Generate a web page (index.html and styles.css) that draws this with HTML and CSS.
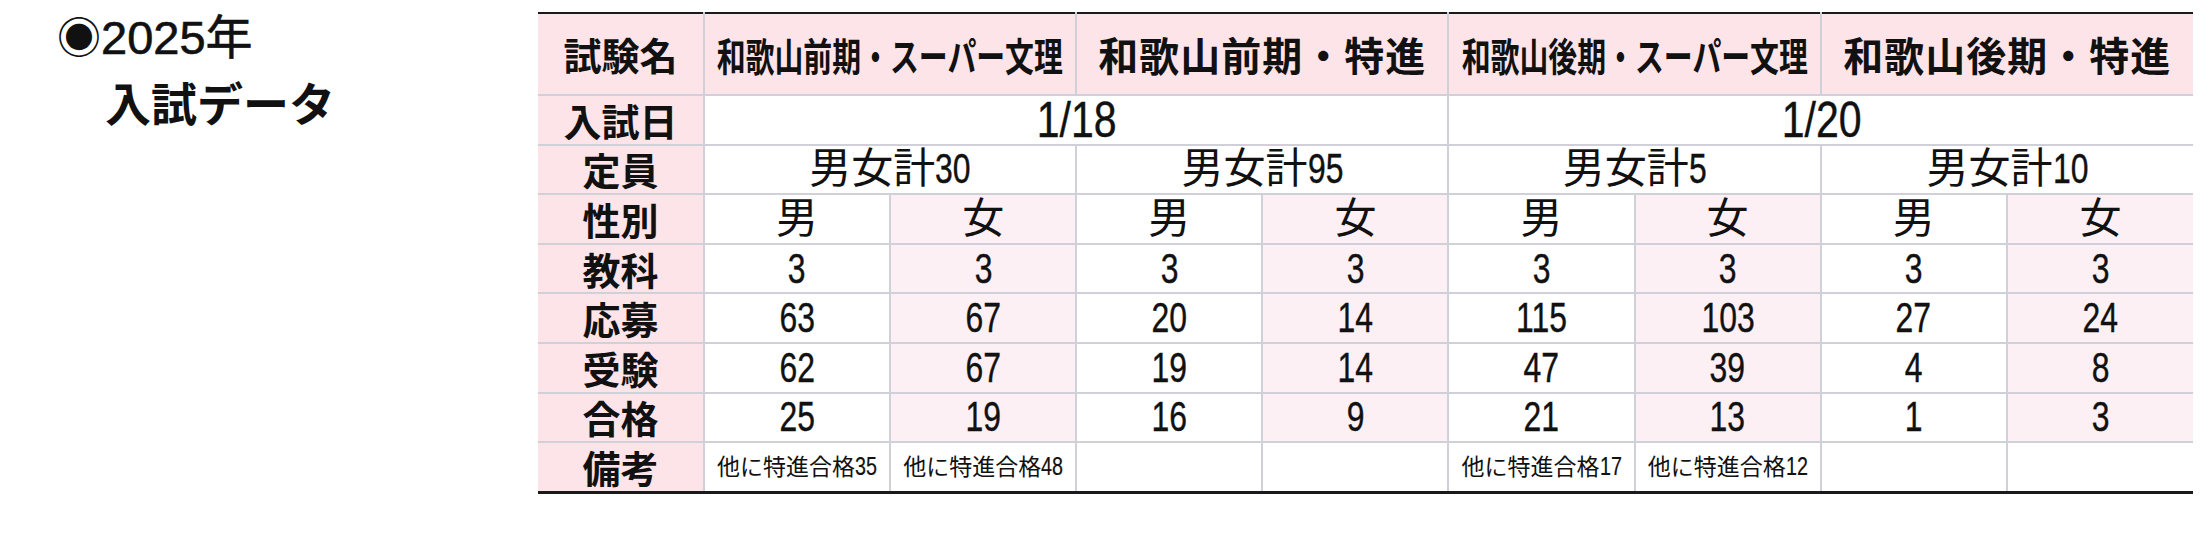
FILE: index.html
```html
<!DOCTYPE html>
<html lang="ja">
<head>
<meta charset="utf-8">
<title>2025年 入試データ</title>
<link rel="stylesheet" href="styles.css">
</head>
<body>
<div class="page">
  <div class="title">
    <div class="title-line1"><span class="mark">◉</span>2025年</div>
    <div class="title-line2">入試データ</div>
  </div>
  <table class="data">
    <colgroup>
      <col class="c-label">
      <col class="c-val"><col class="c-val"><col class="c-val"><col class="c-val">
      <col class="c-val"><col class="c-val"><col class="c-val"><col class="c-val">
    </colgroup>
    <tr class="r-head">
      <th class="lab">試験名</th>
      <th colspan="2" class="head"><div class="squeeze"><span>和歌山前期・スーパー文理</span></div></th>
      <th colspan="2" class="head wide">和歌山前期・特進</th>
      <th colspan="2" class="head"><div class="squeeze"><span>和歌山後期・スーパー文理</span></div></th>
      <th colspan="2" class="head wide">和歌山後期・特進</th>
    </tr>
    <tr>
      <th class="lab">入試日</th>
      <td colspan="4" class="date"><span class="sq">1/18</span></td>
      <td colspan="4" class="date"><span class="sq">1/20</span></td>
    </tr>
    <tr>
      <th class="lab">定員</th>
      <td colspan="2">男女計<span class="num num-2">30</span></td>
      <td colspan="2">男女計<span class="num num-2">95</span></td>
      <td colspan="2">男女計<span class="num num-1">5</span></td>
      <td colspan="2">男女計<span class="num num-2">10</span></td>
    </tr>
    <tr>
      <th class="lab">性別</th>
      <td>男</td><td class="f">女</td><td>男</td><td class="f">女</td>
      <td>男</td><td class="f">女</td><td>男</td><td class="f">女</td>
    </tr>
    <tr>
      <th class="lab">教科</th>
      <td><span class="sq">3</span></td><td class="f"><span class="sq">3</span></td><td><span class="sq">3</span></td><td class="f"><span class="sq">3</span></td>
      <td><span class="sq">3</span></td><td class="f"><span class="sq">3</span></td><td><span class="sq">3</span></td><td class="f"><span class="sq">3</span></td>
    </tr>
    <tr>
      <th class="lab">応募</th>
      <td><span class="sq">63</span></td><td class="f"><span class="sq">67</span></td><td><span class="sq">20</span></td><td class="f"><span class="sq">14</span></td>
      <td><span class="sq">115</span></td><td class="f"><span class="sq">103</span></td><td><span class="sq">27</span></td><td class="f"><span class="sq">24</span></td>
    </tr>
    <tr>
      <th class="lab">受験</th>
      <td><span class="sq">62</span></td><td class="f"><span class="sq">67</span></td><td><span class="sq">19</span></td><td class="f"><span class="sq">14</span></td>
      <td><span class="sq">47</span></td><td class="f"><span class="sq">39</span></td><td><span class="sq">4</span></td><td class="f"><span class="sq">8</span></td>
    </tr>
    <tr>
      <th class="lab">合格</th>
      <td><span class="sq">25</span></td><td class="f"><span class="sq">19</span></td><td><span class="sq">16</span></td><td class="f"><span class="sq">9</span></td>
      <td><span class="sq">21</span></td><td class="f"><span class="sq">13</span></td><td><span class="sq">1</span></td><td class="f"><span class="sq">3</span></td>
    </tr>
    <tr class="r-note">
      <th class="lab">備考</th>
      <td class="note">他に特進合格<span class="num num-2">35</span></td><td class="note">他に特進合格<span class="num num-2">48</span></td><td class="note"></td><td class="note"></td>
      <td class="note">他に特進合格<span class="num num-2">17</span></td><td class="note">他に特進合格<span class="num num-2">12</span></td><td class="note"></td><td class="note"></td>
    </tr>
  </table>
</div>
</body>
</html>
```

FILE: styles.css
```css
html, body {
  margin: 0;
  padding: 0;
  background: #ffffff;
}

.page {
  display: flex;
  align-items: flex-start;
  color: #111111;
  font-family: "Liberation Sans", "Noto Sans CJK JP", sans-serif;
}

.title {
  width: 481px;
  padding-left: 57px;
  padding-top: 2px;
  flex: none;
}

.title-line1 {
  font-size: 47px;
  line-height: 66px;
  height: 66px;
  white-space: nowrap;
  font-family: "Liberation Sans", "Noto Sans CJK JP", sans-serif;
  -webkit-text-stroke: 0.6px #111111;
}

.mark {
  font-family: "Noto Sans CJK JP", sans-serif;
  font-size: 44px;
  -webkit-text-stroke: 0;
}

.title-line2 {
  font-family: "Noto Sans CJK JP", sans-serif;
  font-weight: 700;
  font-size: 46px;
  line-height: 66px;
  padding-left: 48px;
  white-space: nowrap;
}

.data {
  margin-top: 12px;
  border-collapse: collapse;
  table-layout: fixed;
  width: 1655px;
  border-top: 2px solid #1a1a1a;
  border-bottom: 3px solid #1a1a1a;
  font-family: "Liberation Sans", "Noto Sans CJK JP", sans-serif;
}

.c-label { width: 166px; }
.c-val { width: 186.1px; }

.data th,
.data td {
  border: 2px solid #cfd0d8;
  padding: 0;
  text-align: center;
  vertical-align: middle;
  white-space: nowrap;
  overflow: visible;
  height: 47.6px;
  font-size: 42px;
  font-weight: normal;
  line-height: 44px;
}

.data tr > :first-child { border-left: none; }
.data tr > :last-child { border-right: none; }
.data tr:first-child > * { border-top: none; }
.data tr:last-child > * { border-bottom: none; }

.data .lab {
  background: #fde4e9;
  font-family: "Noto Sans CJK JP", sans-serif;
  font-weight: 700;
  font-size: 38px;
}

.r-head th {
  height: 80px;
  background: #fde4e9;
}

.data .head {
  font-family: "Noto Sans CJK JP", sans-serif;
  font-weight: 700;
  font-size: 40px;
}

.data .head.wide {
  letter-spacing: 1px;
}

.squeeze {
  display: flex;
  justify-content: center;
  width: 100%;
}

.squeeze span {
  flex: none;
  display: inline-block;
  font-size: 39px;
  transform: scaleX(0.74);
  transform-origin: center;
}

/* condensed digits (centred) */
.sq {
  display: inline-block;
  transform: scaleX(0.76);
  transform-origin: center;
  -webkit-text-stroke: 0.4px #111111;
}

/* condensed digits following other text */
.num {
  display: inline-block;
  transform: scaleX(0.76);
  transform-origin: left center;
  -webkit-text-stroke: 0.4px #111111;
}

.num-1 { margin-right: -0.134em; }
.num-2 { margin-right: -0.267em; }

.data .f {
  background: #fdf0f5;
}

.data .date {
  font-size: 50px;
}

.data .date .sq {
  transform: scaleX(0.82);
}

.data td.note {
  font-size: 23px;
  background: #ffffff;
}

.data td.note .num {
  font-size: 26px;
  -webkit-text-stroke: 0.2px #111111;
}
```
